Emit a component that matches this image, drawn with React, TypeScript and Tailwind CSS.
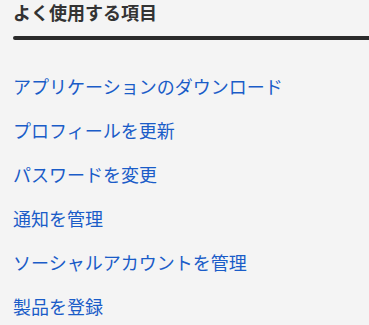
import React from "react";

const links = [
  "アプリケーションのダウンロード",
  "プロフィールを更新",
  "パスワードを変更",
  "通知を管理",
  "ソーシャルアカウントを管理",
  "製品を登録",
];

export default function App() {
  return (
    <div
      className="w-[369px] h-[325px] overflow-hidden bg-[#f4f4f4] pl-[13px]"
      style={{ fontFamily: '"Noto Sans CJK JP", "Noto Sans", sans-serif' }}
    >
      <h2 className="text-[18px] font-bold leading-[24px] text-[#333333] pt-0">
        よく使用する項目
      </h2>
      <div className="mt-[12px] h-[4px] bg-[#2b2b2b] rounded-l-full" />
      <ul className="mt-[34px] flex flex-col gap-[20px]">
        {links.map((l) => (
          <li key={l} className="text-[18px] leading-[24px]">
            <a href="#" className="block text-[#1a5cc8]">
              {l}
            </a>
          </li>
        ))}
      </ul>
    </div>
  );
}
